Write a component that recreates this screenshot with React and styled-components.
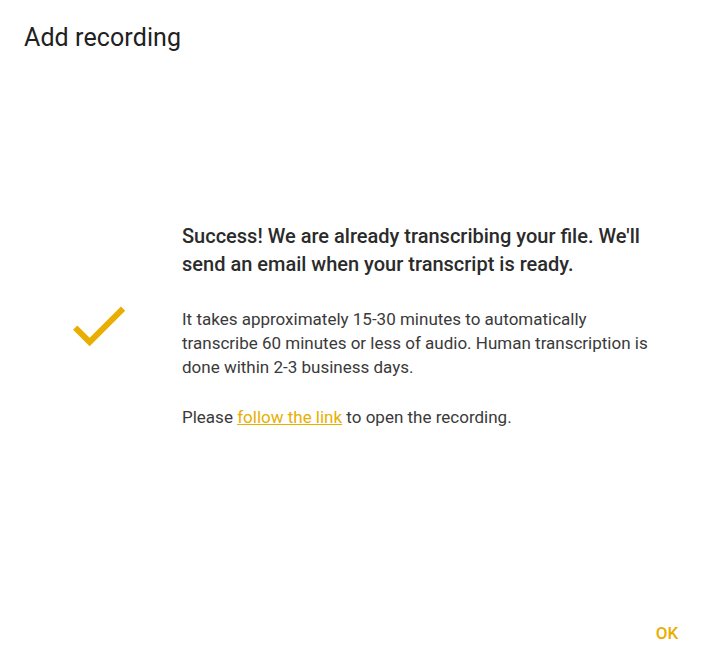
import React from 'react';
import styled, { createGlobalStyle } from 'styled-components';

const GlobalStyle = createGlobalStyle`
  html, body {
    margin: 0;
    padding: 0;
    background: #fff;
  }
  body {
    font-family: Roboto, "Noto Sans", sans-serif;
    color: #212121;
  }
`;

const Dialog = styled.div`
  display: flex;
  flex-direction: column;
  height: 100vh;
  box-sizing: border-box;
`;

const Title = styled.h2`
  margin: 0;
  padding: 24px;
  font-size: 25px;
  line-height: 28px;
  font-weight: 400;
  letter-spacing: 0.1px;
  color: #212121;
`;

const Content = styled.div`
  flex: 1;
  display: flex;
  align-items: center;
  justify-content: center;
  padding: 0 0 40px 6px;
`;

const Row = styled.div`
  display: flex;
  align-items: center;
  gap: 48px;
`;

const CheckIcon = styled.svg`
  width: 71px;
  height: 71px;
  flex-shrink: 0;
  fill: #e8ae00;
`;

const Text = styled.div`
  width: 470px;
`;

const Heading = styled.p`
  margin: 0 0 29px;
  font-size: 20px;
  line-height: 28px;
  font-weight: 500;
  color: #2b2b2b;
`;

const Paragraph = styled.p`
  margin: 0 0 ${(p) => p.$gap || 0}px;
  font-size: 17px;
  line-height: 24px;
  color: #3a3a3a;
`;

const Link = styled.a`
  color: #e8ae00;
  text-decoration: underline;
  cursor: pointer;
`;

const Actions = styled.div`
  display: flex;
  justify-content: flex-end;
  padding: 0 10px 10px;
`;

const Button = styled.button`
  min-width: 64px;
  height: 36px;
  padding: 6px 8px;
  border: none;
  background: transparent;
  font-family: Roboto, sans-serif;
  font-size: 17px;
  font-weight: 500;
  text-transform: uppercase;
  color: #e8ae00;
  cursor: pointer;
`;

const App = () => {
  return (
    <Dialog>
      <GlobalStyle />
      <Title>Add recording</Title>
      <Content>
        <Row>
          <CheckIcon viewBox="0 0 24 24">
            <path d="M9 16.17L4.83 12l-1.42 1.41L9 19 21 7l-1.41-1.41z" />
          </CheckIcon>
          <Text>
            <Heading>
              Success! We are already transcribing your file. We'll send an email when your transcript is ready.
            </Heading>
            <Paragraph $gap={26}>
              It takes approximately 15-30 minutes to automatically transcribe 60 minutes or less of audio. Human transcription is done within 2-3 business days.
            </Paragraph>
            <Paragraph>
              Please <Link>follow the link</Link> to open the recording.
            </Paragraph>
          </Text>
        </Row>
      </Content>
      <Actions>
        <Button>OK</Button>
      </Actions>
    </Dialog>
  );
};

export default App;
